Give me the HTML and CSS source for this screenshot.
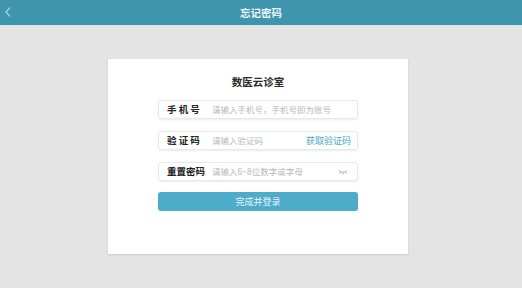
FILE: index.html
```html
<!DOCTYPE html>
<html lang="zh">
<head>
<meta charset="utf-8">
<link rel="stylesheet" href="styles.css">
</head>
<body>
<header class="topbar">
  <span class="back">
    <svg width="8" height="12" viewBox="0 0 8 12"><path d="M6 1.5 L2 6 L6 10.5" fill="none" stroke="#9fd0e0" stroke-width="1.3"/></svg>
  </span>
  <h1 class="title">忘记密码</h1>
</header>
<main class="page">
  <section class="card">
    <h2 class="brand">数医云诊室</h2>
    <div class="field">
      <span class="label spaced">手 机 号</span>
      <span class="ph">请输入手机号，手机号即为账号</span>
    </div>
    <div class="field">
      <span class="label spaced">验 证 码</span>
      <span class="ph">请输入验证码</span>
      <span class="code">获取验证码</span>
    </div>
    <div class="field">
      <span class="label">重置密码</span>
      <span class="ph">请输入6~8位数字或字母</span>
      <span class="eye">
        <svg width="10" height="6" viewBox="0 0 10 6"><path d="M1 1.5 Q5 5 9 1.5 M2.5 3.2 L1.5 4.8 M5 4 L5 5.6 M7.5 3.2 L8.5 4.8" fill="none" stroke="#aaa" stroke-width="0.9"/></svg>
      </span>
    </div>
    <button class="submit">完成并登录</button>
  </section>
</main>
</body>
</html>
```
FILE: styles.css
```css
* { box-sizing: border-box; margin: 0; padding: 0; }
html, body { height: 100%; }
body {
  font-family: "Noto Sans CJK SC", "Noto Sans", sans-serif;
  background: #e4e4e4;
  width: 522px;
  height: 288px;
  overflow: hidden;
}
.topbar {
  height: 26px;
  background: #3f95ad;
  border-bottom: 1px solid #d2e6ec;
  display: flex;
  align-items: center;
  justify-content: center;
  position: relative;
}
.back {
  position: absolute;
  left: 4px;
  top: 6px;
  display: flex;
}
.title {
  color: #eef7fa;
  font-size: 10.5px;
  font-weight: bold;
  line-height: 25px;
}
.page {
  padding-top: 33px;
  padding-left: 108px;
}
.card {
  width: 300px;
  height: 195px;
  background: #fff;
  box-shadow: 0 1px 2px rgba(0,0,0,0.12);
  padding-top: 16px;
  display: flex;
  flex-direction: column;
  align-items: center;
}
.brand {
  font-size: 10.5px;
  font-weight: bold;
  color: #2a2a2a;
  line-height: 14px;
  margin-bottom: 11px;
}
.field {
  width: 200px;
  height: 19px;
  border: 1px solid #e8e8e8;
  border-radius: 3px;
  box-shadow: 0 1px 2px rgba(0,0,0,0.08);
  display: flex;
  align-items: center;
  padding: 0 6px 0 8px;
  margin-bottom: 12px;
}
.label {
  font-size: 9.5px;
  font-weight: bold;
  color: #222;
  width: 45px;
  flex: none;
  line-height: 17px;
}
.label.spaced { letter-spacing: 0px; }
.ph {
  font-size: 8.5px;
  color: #b8b8b8;
  flex: 1;
  white-space: nowrap;
  line-height: 17px;
}
.code {
  font-size: 9px;
  color: #4ba8c6;
  line-height: 17px;
  white-space: nowrap;
}
.eye { display: flex; margin-right: 3px; }
.submit {
  width: 200px;
  height: 19px;
  border: none;
  border-radius: 3px;
  background: #4cacc9;
  color: #eaf6fa;
  font-family: "Noto Sans CJK SC", sans-serif;
  font-size: 9px;
  line-height: 19px;
  margin-top: -1px;
}
```
